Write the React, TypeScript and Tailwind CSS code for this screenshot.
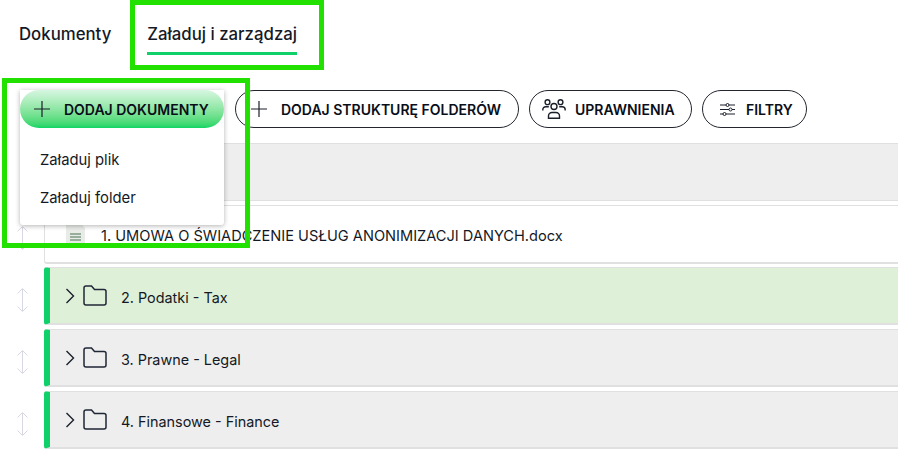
import type { ReactNode } from 'react'

const font = { fontFamily: 'Inter' }

function Plus({ className }: { className: string }) {
  return (
    <svg viewBox="0 0 16 16" className={className} fill="none" stroke="currentColor" strokeWidth="1.2">
      <path d="M8 0v16M0 8h16" />
    </svg>
  )
}

function PeopleIcon() {
  return (
    <svg viewBox="0 0 24 20" className="h-5 w-6" fill="none" stroke="#1a1f2b" strokeWidth="1.4">
      <circle cx="12" cy="7.500" r="3" />
      <path d="M6.500 19.200v-2.200a3.500 3.500 0 0 1 3.500-3.500h4a3.500 3.500 0 0 1 3.500 3.500v2.200z" />
      <circle cx="5.500" cy="3.200" r="2.400" />
      <circle cx="18.500" cy="3.200" r="2.400" />
      <path d="M.8 11.500v-.8a3 3 0 0 1 3-3h3M23.200 11.500v-.8a3 3 0 0 0-3-3h-3" />
    </svg>
  )
}

function SlidersIcon() {
  return (
    <svg viewBox="0 0 15 13" className="h-[13px] w-[15px]" fill="none" stroke="#1a1f2b" strokeWidth="1">
      <path d="M0 2h6M9 2h6M0 6.500h9M12 6.500h3M0 11h3M6 11h9" />
      <circle cx="7.500" cy="2" r="1.500" />
      <circle cx="10.500" cy="6.500" r="1.500" />
      <circle cx="4.500" cy="11" r="1.500" />
    </svg>
  )
}

function OutlineButton({ width, padding, gap, icon, label }: { width: string; padding: string; gap: string; icon: ReactNode; label: string }) {
  return (
    <div className={`flex h-[38px] items-center rounded-full border border-[#23262e] text-sm font-semibold text-[#0a0e18] ${width} ${padding} ${gap}`}>
      {icon}
      <span className="pt-[2px]">{label}</span>
    </div>
  )
}

function DragHandle() {
  return (
    <svg viewBox="0 0 11 24" className="mt-[7px] h-6 w-[11px] shrink-0" fill="none" stroke="#d8d8e2" strokeWidth="1">
      <path d="M5.500 1v22M.5 5.500l5-5 5 5M.5 18.500l5 5 5-5" />
    </svg>
  )
}

function FolderRow({ label, bg }: { label: string; bg: string }) {
  return (
    <div className="flex items-center">
      <div className="flex w-[44px] justify-center pl-[1px]">
        <DragHandle />
      </div>
      <div className={`flex h-[58px] flex-1 items-center rounded-l-[3px] border-b-2 border-t border-[#e0e0e0] border-l-[6px] border-l-[#0fd069] pl-[15px] ${bg}`}>
        <svg viewBox="0 0 10 16" className="mt-[1px] h-4 w-[10px]" fill="none" stroke="#1a1f2b" strokeWidth="1.4">
          <path d="M1.500 1l7 7-7 7" />
        </svg>
        <svg viewBox="0 0 24 21" className="ml-[8px] h-[21px] w-6" fill="none" stroke="#1f2636" strokeWidth="1.500">
          <path d="M1 18V3a2 2 0 0 1 2-2h5.500l3 3.500H21a2 2 0 0 1 2 2V18a2 2 0 0 1-2 2H3a2 2 0 0 1-2-2z" />
        </svg>
        <span className="ml-[14px] pt-[4px] text-[14.4px] text-[#141925]">{label}</span>
      </div>
    </div>
  )
}

export default function App() {
  return (
    <div className="relative h-[450px] w-[898px] overflow-hidden bg-white" style={font}>
      <div className="flex h-[70px] items-start pl-[19px] pt-[24px] text-[16.8px] font-medium leading-[20px] text-[#141925]">
        <span>Dokumenty</span>
        <div className="ml-[36px] flex flex-col">
          <span>Załaduj i zarządzaj</span>
          <span className="mt-[8px] h-[3px] bg-[#0fd069]" />
        </div>
      </div>

      <div className="mt-5 flex gap-[10px] pl-[235px]">
        <OutlineButton width="w-[284px]" padding="pl-[15px]" gap="gap-[14px]" icon={<Plus className="h-4 w-4 text-[#1a1f2b]" />} label="DODAJ STRUKTURĘ FOLDERÓW" />
        <OutlineButton width="w-[163px]" padding="pl-[12px]" gap="gap-[9px]" icon={<PeopleIcon />} label="UPRAWNIENIA" />
        <OutlineButton width="w-[105px]" padding="pl-[17px]" gap="gap-[11px]" icon={<SlidersIcon />} label="FILTRY" />
      </div>

      <div className="mt-[15px] flex flex-col gap-[4px]">
        <div className="ml-[44px] h-[58px] border-y border-[#e0e0e0] bg-[#eeeeee]" />
        <div className="flex items-center">
          <div className="flex w-[44px] justify-center pl-[1px]">
            <DragHandle />
          </div>
          <div className="flex h-[59px] flex-1 items-center rounded-l-[3px] border border-r-0 border-b-2 border-[#e0e0e0] bg-white pl-[20px]">
            <svg viewBox="0 0 21 24" className="h-6 w-[21px]" fill="none">
              <path d="M1 1h14l5 5v17H1z" fill="#e8ebe8" />
              <path d="M5 12h11M5 15h11M5 18h11" stroke="#7e9a82" strokeWidth="1.300" />
            </svg>
            <span className="ml-[15px] pt-[5px] text-[14.6px] text-[#141925]">1. UMOWA O ŚWIADCZENIE USŁUG ANONIMIZACJI DANYCH.docx</span>
          </div>
        </div>
        <div className="-mt-[1px]">
          <FolderRow label="2. Podatki - Tax" bg="bg-[#dff0d8]" />
        </div>
        <FolderRow label="3. Prawne - Legal" bg="bg-[#eeeeee]" />
        <FolderRow label="4. Finansowe - Finance" bg="bg-[#eeeeee]" />
      </div>

      {/* dropdown open over the list */}
      <div className="absolute left-[20px] top-[90px] h-[135px] w-[204px] rounded-b-[3px] bg-white shadow-[0_1px_5px_rgba(0,0,0,0.3)]">
        <div className="flex h-[38px] items-center gap-[14px] rounded-[19px] bg-gradient-to-b from-[#d6f6e0] to-[#04d564] pl-[14px] text-sm font-semibold text-[#0a0e18]">
          <Plus className="h-4 w-4 text-[#1a1f2b]" />
          <span className="pt-[2px]">DODAJ DOKUMENTY</span>
        </div>
        <p className="ml-[20px] mt-[22px] text-[14.8px] leading-[20px] text-[#141925]">Załaduj plik</p>
        <p className="ml-[20px] mt-[18px] text-[14.8px] leading-[20px] text-[#141925]">Załaduj folder</p>
      </div>

      {/* highlight frames drawn on the screenshot */}
      <div className="absolute left-[130px] top-0 h-[70px] w-[194px] border-[5px] border-[#22e000]" />
      <div className="absolute left-[2px] top-[78px] h-[170px] w-[248px] border-[5px] border-[#22e000]" />
    </div>
  )
}
